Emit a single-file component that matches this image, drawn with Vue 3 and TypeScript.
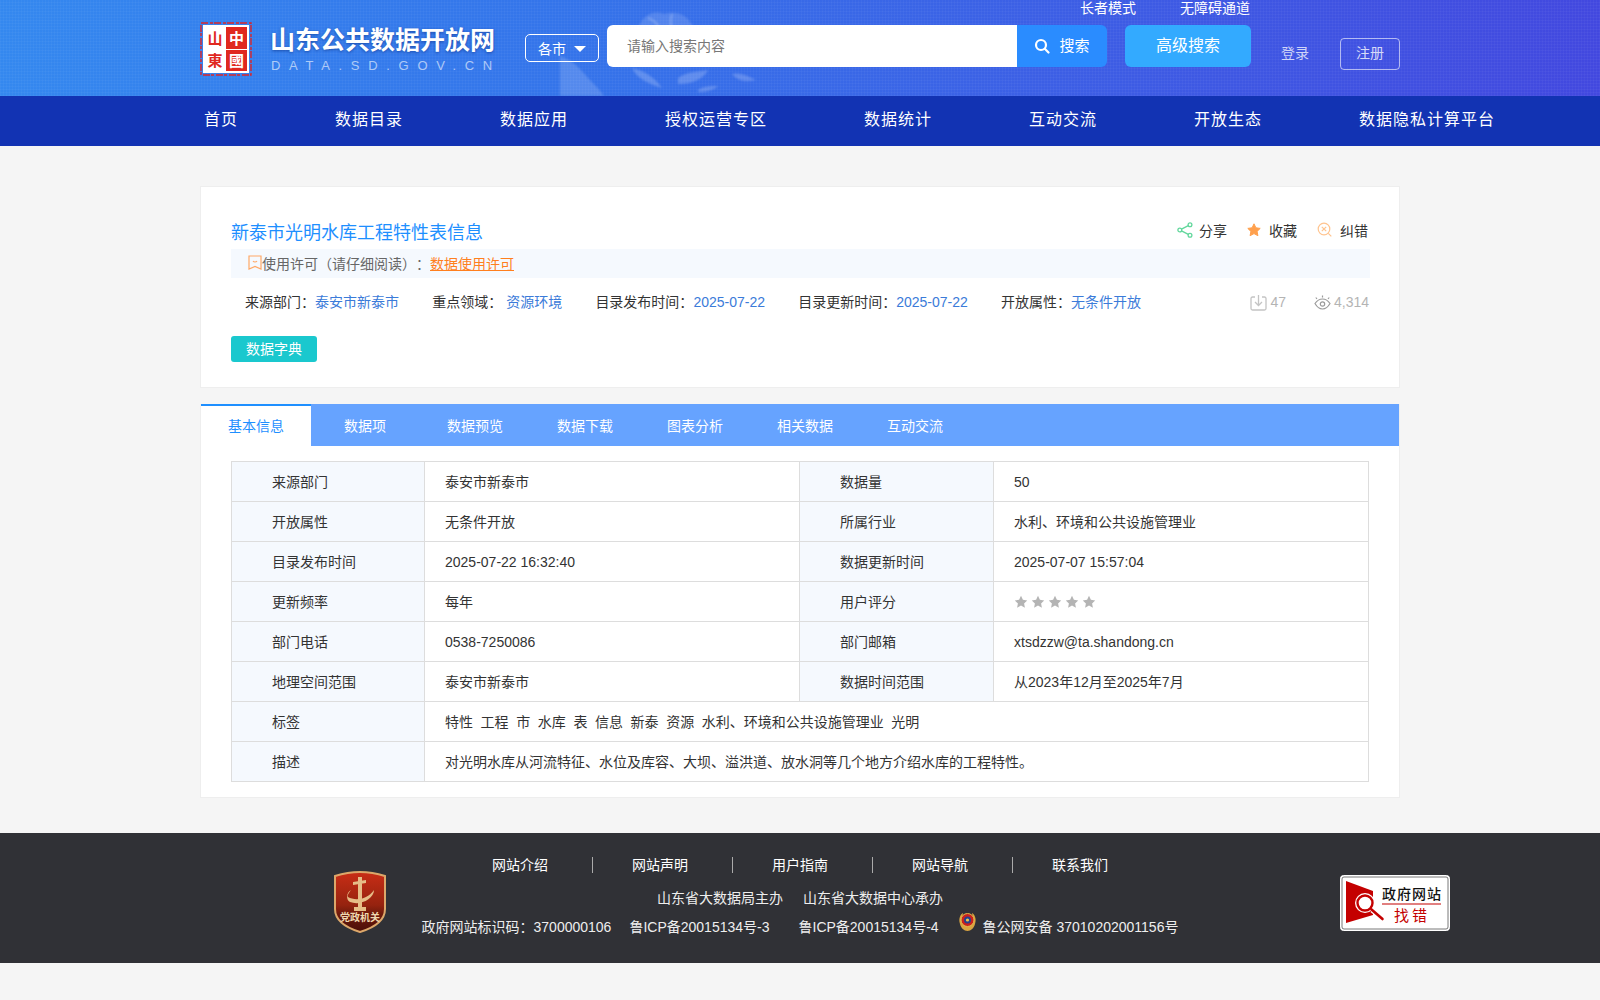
<script setup lang="ts">
const navItems: string[] = ['首页', '数据目录', '数据应用', '授权运营专区', '数据统计', '互动交流', '开放生态', '数据隐私计算平台']
const tabs: string[] = ['基本信息', '数据项', '数据预览', '数据下载', '图表分析', '相关数据', '互动交流']
const footerLinks: string[] = ['网站介绍', '网站声明', '用户指南', '网站导航', '联系我们']
const rows: [string, string, string, string][] = [
  ['来源部门', '泰安市新泰市', '数据量', '50'],
  ['开放属性', '无条件开放', '所属行业', '水利、环境和公共设施管理业'],
  ['目录发布时间', '2025-07-22 16:32:40', '数据更新时间', '2025-07-07 15:57:04'],
  ['更新频率', '每年', '用户评分', ''],
  ['部门电话', '0538-7250086', '部门邮箱', 'xtsdzzw@ta.shandong.cn'],
  ['地理空间范围', '泰安市新泰市', '数据时间范围', '从2023年12月至2025年7月']
]
const tags: string[] = ['特性', '工程', '市', '水库', '表', '信息', '新泰', '资源', '水利、环境和公共设施管理业', '光明']
const starPath = 'M7 .8l1.9 4 4.3.6-3.1 3 .8 4.3L7 10.6l-3.9 2.1.8-4.3-3.1-3 4.3-.6z'
const isCjk = (value: string): boolean => /[^\x00-\x7f]/.test(value)
</script>

<template>
  <div class="page">
    <header class="header">
      <svg class="cloud" viewBox="0 0 240 96" aria-hidden="true">
        <path d="M80 24c4-9 14-14 24-10 10-3 22 0 26 8 5 4 3 11-3 12l-47 2c-4-3-4-8 0-12z" fill="#fff" opacity=".14" />
        <path d="M88 18c6 2 10 6 12 12M112 14c-2 6-2 12 2 18" stroke="#fff" stroke-width="2" fill="none" opacity=".22" />
        <path d="M0 56c12 4 20 12 28 22 6 6 12 12 16 18H0z" fill="#fff" opacity=".16" />
        <path d="M72 68c10 2 22 8 30 20-12-4-24-8-30-20zM118 78c8-6 18-6 30-8-4 8-14 14-30 14zM172 74c8-2 16 2 24 6-8 2-18 2-24-6zM138 90c6-4 12-4 20-4-4 4-12 6-20 6z" fill="#fff" opacity=".2" />
      </svg>
      <div class="header-inner">
        <div class="top-links"><span>长者模式</span><span>无障碍通道</span></div>
        <div class="main-row">
          <div class="logo">
            <svg class="seal" viewBox="0 0 52 54" aria-hidden="true">
              <rect x="1" y="1" width="50" height="52" fill="none" stroke="#d9262b" stroke-width="1.4" stroke-dasharray="7 2 3 1" />
              <rect x="3" y="3" width="46" height="48" fill="#fff" />
              <rect x="26" y="5" width="21" height="22" fill="#e0281f" />
              <rect x="26" y="28" width="21" height="21" fill="#e0281f" />
              <text x="15" y="22" class="seal-text seal-red">山</text>
              <text x="15" y="44" class="seal-text seal-red">東</text>
              <text x="36.500" y="22" class="seal-text seal-white">中</text>
              <text x="36.500" y="44" class="seal-text seal-white">國</text>
            </svg>
            <div class="logo-text">
              <div class="logo-title">山东公共数据开放网</div>
              <div class="logo-sub">DATA.SD.GOV.CN</div>
            </div>
          </div>
          <div class="city"><span>各市</span><i class="caret"></i></div>
          <div class="search">
            <input class="search-input" type="text" placeholder="请输入搜索内容" />
            <button class="search-btn" type="button">
              <svg width="16" height="16" viewBox="0 0 16 16" aria-hidden="true">
                <circle cx="7" cy="7" r="5" fill="none" stroke="#fff" stroke-width="2.2" />
                <path d="M10.800 10.800l3.700 3.700" stroke="#fff" stroke-width="2.2" stroke-linecap="round" />
              </svg>
              <span>搜索</span>
            </button>
          </div>
          <button class="advanced" type="button">高级搜索</button>
          <span class="login">登录</span>
          <span class="register">注册</span>
        </div>
      </div>
    </header>

    <nav class="nav">
      <div class="nav-inner">
        <a v-for="item in navItems" :key="item" class="nav-item">{{ item }}</a>
      </div>
    </nav>

    <main class="content">
      <section class="card summary">
        <div class="title-row">
          <h1 class="title">新泰市光明水库工程特性表信息</h1>
          <div class="actions">
            <span class="action">
              <svg width="16" height="16" viewBox="0 0 16 16" aria-hidden="true">
                <g fill="none" stroke="#62d79c" stroke-width="1.300">
                  <circle cx="2.800" cy="8" r="1.900" /><circle cx="13" cy="2.800" r="1.900" /><circle cx="13" cy="13.200" r="1.900" />
                  <path d="M4.500 7.100l6.800-3.500M4.500 8.900l6.800 3.500" />
                </g>
              </svg>
              分享
            </span>
            <span class="action wide">
              <svg width="14" height="14" viewBox="0 0 14 14" aria-hidden="true"><path :d="starPath" fill="#ffa04d" stroke="#ffa04d" stroke-linejoin="round" /></svg>
              收藏
            </span>
            <span class="action wide">
              <svg width="15" height="15" viewBox="0 0 15 15" aria-hidden="true">
                <g fill="none" stroke="#ffc48f" stroke-width="1.200">
                  <circle cx="7" cy="7" r="5.800" /><path d="M4.800 4.800l4.400 4.400M9.200 4.800l-4.400 4.400M11.300 11.300l3 3" />
                </g>
              </svg>
              纠错
            </span>
          </div>
        </div>
        <div class="license">
          <svg width="14" height="15" viewBox="0 0 14 15" aria-hidden="true">
            <path d="M1 1h12v13l-6-2.500L1 14zM5 6c1 1.300 3 1.300 4 0" fill="none" stroke="#ffa866" stroke-width="1.200" />
          </svg>
          <span>使用许可（请仔细阅读）：</span><a class="license-link">数据使用许可</a>
        </div>
        <div class="meta">
          <span>来源部门：<em>泰安市新泰市</em></span>
          <span>重点领域：<em class="spaced">资源环境</em></span>
          <span>目录发布时间：<em>2025-07-22</em></span>
          <span>目录更新时间：<em>2025-07-22</em></span>
          <span>开放属性：<em>无条件开放</em></span>
          <div class="counters">
            <span class="counter">
              <svg width="17" height="17" viewBox="0 0 17 17" aria-hidden="true">
                <path d="M5 3H2.500A1.500 1.500 0 0 0 1 4.500v10A1.500 1.500 0 0 0 2.500 16h12a1.500 1.500 0 0 0 1.500-1.500v-10A1.500 1.500 0 0 0 14.500 3H12M8.500 1v10M5 8l3.500 3.500L12 8" fill="none" stroke="#c4c4c4" stroke-width="1.300" />
              </svg>
              47
            </span>
            <span class="counter">
              <svg width="17" height="16" viewBox="0 0 17 16" aria-hidden="true">
                <g fill="none" stroke="#9a9a9a" stroke-width="1.200">
                  <path d="M1 9.500C3 6.500 5.500 5 8.500 5s5.500 1.500 7.500 4.500C14 13 11.500 15 8.500 15S3 13 1 9.500z" />
                  <circle cx="8.500" cy="10" r="2.200" />
                  <path d="M3 5L1.800 3.500M8.500 3.500V1.500M14 5l1.200-1.500" />
                </g>
              </svg>
              4,314
            </span>
          </div>
        </div>
        <button class="dict" type="button">数据字典</button>
      </section>

      <section class="card detail">
        <div class="tabs">
          <span v-for="(tab, i) in tabs" :key="i" class="tab" :class="{ active: i === 0 }">{{ tab }}</span>
        </div>
        <table class="table">
          <colgroup>
            <col class="col-a" /><col class="col-b" /><col class="col-c" /><col class="col-d" />
          </colgroup>
          <tbody>
            <tr v-for="row in rows" :key="row[0]">
              <th>{{ row[0] }}</th>
              <td :class="{ lift: isCjk(row[1]) }">{{ row[1] }}</td>
              <th>{{ row[2] }}</th>
              <td :class="{ lift: isCjk(row[3]) }">
                <template v-if="row[3]">{{ row[3] }}</template>
                <span v-else class="stars">
                  <svg v-for="n in 5" :key="n" width="14" height="14" viewBox="0 0 14 14" aria-hidden="true"><path :d="starPath" fill="#b4b4b4" /></svg>
                </span>
              </td>
            </tr>
            <tr>
              <th>标签</th>
              <td colspan="3" class="lift"><span class="tag-list"><span v-for="t in tags" :key="t">{{ t }}</span></span></td>
            </tr>
            <tr>
              <th>描述</th>
              <td colspan="3" class="lift">对光明水库从河流特征、水位及库容、大坝、溢洪道、放水洞等几个地方介绍水库的工程特性。</td>
            </tr>
          </tbody>
        </table>
      </section>
    </main>

    <footer class="footer">
      <div class="foot-left">
        <svg class="party" viewBox="0 0 52 62" aria-hidden="true">
          <defs>
            <linearGradient id="partyFill" x1="0" y1="0" x2="0" y2="1">
              <stop offset="0" stop-color="#c92d16" />
              <stop offset=".55" stop-color="#96230f" />
              <stop offset=".7" stop-color="#6e1a0c" />
              <stop offset="1" stop-color="#4a0f08" />
            </linearGradient>
          </defs>
          <path d="M26 1c8 0 17 1.500 25 4v33c0 12-12 19-25 23C13 57 1 50 1 38V5c8-2.500 17-4 25-4z" fill="url(#partyFill)" stroke="#dca76a" stroke-width="2" />
          <path d="M24 6h4v30h4v4H20v-4h4zM19 11l13-2v3l-13 2z" fill="#e6bd87" />
          <path d="M14 26c7 4 19 3 26-7 0 9-14 16-24 12-4-2-4-9 1-12-2 3-4 5-3 7z" fill="#e6bd87" />
          <text x="26" y="50" class="party-text">党政机关</text>
        </svg>
      </div>
      <div class="foot-center">
        <div class="foot-links">
          <a v-for="l in footerLinks" :key="l" class="foot-link">{{ l }}</a>
        </div>
        <div class="foot-org"><span>山东省大数据局主办</span><span>山东省大数据中心承办</span></div>
        <div class="foot-ids">
          <span>政府网站标识码：3700000106</span>
          <span class="id-b">鲁ICP备20015134号-3</span>
          <span class="id-c">鲁ICP备20015134号-4</span>
          <svg class="police" viewBox="0 0 19 20" aria-hidden="true">
            <path d="M2 12C0 6 3 2 5 1c-1 4 0 8 4.500 12 4.500-4 5.500-8 4.500-12 2 1 5 5 3 11-1 4-4 7-7.500 7S3 16 2 12z" fill="#d9a441" />
            <circle cx="9.500" cy="8" r="6.500" fill="#c8211e" stroke="#e5b84a" />
            <circle cx="9.500" cy="8" r="3.500" fill="#24408f" />
            <circle cx="9.500" cy="8" r="1.600" fill="#f0c64f" />
          </svg>
          <span class="id-d">鲁公网安备 37010202001156号</span>
        </div>
      </div>
      <div class="foot-right">
        <svg class="report" viewBox="0 0 110 56" aria-hidden="true">
          <rect x=".5" y=".5" width="109" height="55" rx="3" fill="#fff" stroke="#fff" />
          <rect x="2" y="2" width="106" height="52" rx="2" fill="#fff" stroke="#555" stroke-width=".8" />
          <path d="M6 6l27 10v24L6 48z" fill="#c40000" />
          <circle cx="25" cy="28" r="10" fill="#fff" />
          <circle cx="25" cy="28" r="7.500" fill="#fff" stroke="#c40000" stroke-width="2.400" />
          <path d="M32 35l11 9" stroke="#fff" stroke-width="5" />
          <path d="M31.500 34.500l11 9.500" stroke="#c40000" stroke-width="2.600" stroke-linecap="round" />
          <text x="72" y="24" class="report-a">政府网站</text>
          <path d="M42 29h59" stroke="#c40000" stroke-width="1.200" />
          <text x="72" y="46" class="report-b">找错</text>
        </svg>
      </div>
    </footer>
  </div>
</template>

<style scoped>
.page {
  min-height: 1000px;
  background: #f5f5f5;
  font-family: "Liberation Sans", "Noto Sans CJK SC", sans-serif;
  font-size: 14px;
  color: #333;
  text-spacing-trim: space-all;
}
.header {
  position: relative;
  height: 96px;
  overflow: hidden;
  background-color: #3c70ea;
  background-image:
    repeating-linear-gradient(0deg, rgba(255, 255, 255, .03) 0 1px, transparent 1px 3px),
    repeating-linear-gradient(90deg, rgba(255, 255, 255, .03) 0 1px, transparent 1px 3px),
    linear-gradient(90deg, #3488ef 0%, #3474ea 35%, #3c5fe5 65%, #4248df 100%);
}
.cloud {
  position: absolute;
  left: 560px;
  top: 0;
  width: 240px;
  height: 96px;
  filter: blur(.8px);
}
.header-inner {
  position: relative;
  width: 1200px;
  margin: 0 auto;
}
.top-links {
  display: flex;
  gap: 44px;
  height: 16px;
  line-height: 16px;
  margin-left: 880px;
  color: #fff;
  white-space: nowrap;
}
.main-row {
  display: flex;
  align-items: flex-start;
  margin-top: 9px;
}
.logo {
  display: flex;
  width: 325px;
  flex: none;
  margin-top: -3px;
}
.seal {
  width: 52px;
  height: 54px;
  flex: none;
}
.seal-text {
  font-size: 15px;
  font-weight: 700;
  text-anchor: middle;
  font-family: "Noto Sans CJK SC", sans-serif;
}
.seal-red { fill: #e0281f; }
.seal-white { fill: #fff; }
.logo-text {
  margin-left: 18px;
}
.logo-title {
  margin-top: 3px;
  font-size: 25px;
  line-height: 30px;
  font-weight: 700;
  color: #fff;
  white-space: nowrap;
  text-shadow: 0 1px 3px rgba(0, 30, 110, .5);
}
.logo-sub {
  margin-top: 3px;
  margin-left: 1px;
  font-size: 13px;
  line-height: 16px;
  letter-spacing: 8.700px;
  color: rgba(255, 255, 255, .6);
  white-space: nowrap;
}
.city {
  box-sizing: border-box;
  flex: none;
  width: 74px;
  height: 28px;
  margin-top: 9px;
  padding-left: 12px;
  display: flex;
  align-items: center;
  gap: 8px;
  border: 1px solid #fff;
  border-radius: 5px;
  color: #fff;
}
.caret {
  width: 0;
  height: 0;
  border-left: 6px solid transparent;
  border-right: 6px solid transparent;
  border-top: 6px solid #fff;
  margin-top: 2px;
}
.search {
  display: flex;
  flex: none;
  margin-left: 8px;
  height: 42px;
  width: 500px;
}
.search-input {
  box-sizing: border-box;
  width: 410px;
  height: 42px;
  padding: 0 20px;
  border: 0;
  outline: 0;
  border-radius: 6px 0 0 6px;
  background: #fff;
  font: inherit;
}
.search-input::placeholder {
  color: #777;
  opacity: 1;
}
.search-btn {
  width: 90px;
  height: 42px;
  border: 0;
  padding: 0 0 3px;
  display: flex;
  align-items: center;
  justify-content: center;
  gap: 9px;
  border-radius: 0 6px 6px 0;
  background: #2a8cff;
  color: #fff;
  font: inherit;
  font-size: 15px;
}
.search-btn svg {
  margin-top: 2px;
}
.advanced {
  flex: none;
  margin-left: 18px;
  width: 126px;
  height: 42px;
  border: 0;
  padding: 0 0 5px;
  border-radius: 6px;
  background: #33aaff;
  color: #fff;
  font: inherit;
  font-size: 16px;
}
.login {
  flex: none;
  margin-left: 30px;
  margin-top: 18px;
  color: rgba(255, 255, 255, .75);
  line-height: 20px;
}
.register {
  box-sizing: border-box;
  flex: none;
  margin-left: 31px;
  margin-top: 13px;
  width: 60px;
  height: 32px;
  line-height: 28px;
  text-align: center;
  border: 1px solid rgba(255, 255, 255, .6);
  border-radius: 4px;
  color: rgba(255, 255, 255, .8);
}
.nav {
  height: 50px;
  background: #1233b3;
}
.nav-inner {
  width: 1200px;
  margin: 0 auto;
  padding: 0 0 0 4px;
  box-sizing: border-box;
  display: flex;
  gap: 97px;
}
.nav-item {
  line-height: 48px;
  font-size: 16px;
  letter-spacing: 1px;
  color: #fff;
  white-space: nowrap;
}
.content {
  width: 1200px;
  margin: 0 auto;
  padding-top: 40px;
}
.card {
  box-sizing: border-box;
  background: #fff;
  border: 1px solid #eee;
}
.summary {
  height: 202px;
  padding: 29px 29px 0 30px;
}
.title-row {
  height: 33px;
  display: flex;
  align-items: center;
  justify-content: space-between;
  padding-right: 2px;
}
.title {
  margin: 0 0 4px;
  font-size: 18px;
  font-weight: 400;
  color: #1e8fff;
}
.actions {
  display: flex;
  gap: 20px;
  margin-bottom: 6px;
}
.action {
  display: flex;
  align-items: center;
  gap: 6px;
  color: #333;
}
.action.wide {
  gap: 8px;
}
.license {
  height: 29px;
  box-sizing: border-box;
  display: flex;
  align-items: center;
  padding: 0 0 2px 17px;
  background: #f5f9fe;
  color: #666;
}
.license-link {
  color: #ff7f1e;
  text-decoration: underline;
}
.meta {
  height: 46px;
  display: flex;
  align-items: center;
  gap: 33.200px;
  padding: 0 1px 0 14px;
  color: #333;
  white-space: nowrap;
}
.meta em {
  font-style: normal;
  color: #3b7bd9;
}
.meta em.spaced {
  margin-left: 4px;
}
.counters {
  margin: 2px 0 0 auto;
  display: flex;
  gap: 28px;
  color: #b4b4b4;
}
.counter {
  display: flex;
  align-items: center;
  gap: 3px;
}
.dict {
  display: block;
  width: 86px;
  height: 26px;
  margin-top: 12px;
  padding: 0 0 3px;
  border: 0;
  border-radius: 3px;
  background: #1ac8ce;
  color: #fff;
  font: inherit;
}
.detail {
  margin-top: 16px;
  height: 394px;
  border-top: 0;
}
.tabs {
  display: flex;
  height: 42px;
  background: #66a3ff;
}
.tab {
  box-sizing: border-box;
  width: 110px;
  height: 42px;
  padding-right: 2px;
  line-height: 44px;
  text-align: center;
  color: #fff;
}
.tab.active {
  padding-right: 0;
  line-height: 40px;
  background: #fff;
  border-top: 2px solid #1e8fff;
  color: #1e8fff;
}
.table {
  width: 1137px;
  margin: 15px 0 0 30px;
  border-collapse: collapse;
  table-layout: fixed;
}
.col-a { width: 193px; }
.col-b { width: 375px; }
.col-c { width: 194px; }
.col-d { width: 375px; }
.table th,
.table td {
  box-sizing: border-box;
  height: 40px;
  padding: 0 0 0 20px;
  border: 1px solid #ddd;
  text-align: left;
  font-weight: 400;
  color: #333;
}
.table td.lift {
  padding-bottom: 2px;
}
.table th {
  padding: 0 0 2px 40px;
  background: #f5f9fe;
}
.stars {
  display: flex;
  gap: 3px;
}
.tag-list {
  display: flex;
  gap: 7.600px;
}
.footer {
  margin-top: 35px;
  height: 130px;
  background: #303136;
  display: grid;
  grid-template-columns: 1fr auto 1fr;
  color: #eee;
}
.foot-left {
  display: flex;
  justify-content: flex-end;
  padding: 38px 36px 0 0;
}
.party {
  width: 52px;
  height: 62px;
}
.party-text {
  font-size: 10px;
  font-weight: 700;
  fill: #f0d8b0;
  text-anchor: middle;
  font-family: "Noto Sans CJK SC", sans-serif;
}
.foot-center {
  padding-top: 22px;
  display: flex;
  flex-direction: column;
  align-items: center;
}
.foot-links {
  display: flex;
  height: 20px;
  align-items: center;
}
.foot-link {
  line-height: 16px;
  padding-right: 44px;
  margin-right: 39px;
  border-right: 1px solid #aaa;
  color: #fff;
}
.foot-link:last-child {
  padding-right: 0;
  margin-right: 0;
  border-right: 0;
}
.foot-org {
  display: flex;
  gap: 20px;
  margin-top: 13px;
  line-height: 20px;
}
.foot-ids {
  display: flex;
  align-items: center;
  margin-top: 8px;
  height: 20px;
  white-space: nowrap;
}
.id-b { margin-left: 18px; }
.id-c { margin-left: 29px; }
.police {
  width: 19px;
  height: 20px;
  margin: -9px 6px 0 19px;
}
.foot-right {
  padding: 42px 0 0 162px;
}
.report {
  display: block;
  width: 110px;
  height: 56px;
}
.report-a {
  font-size: 14px;
  letter-spacing: 1px;
  font-weight: 500;
  fill: #111;
  text-anchor: middle;
  font-family: "Noto Sans CJK SC", sans-serif;
}
.report-b {
  font-size: 15px;
  letter-spacing: 3px;
  fill: #c40000;
  text-anchor: middle;
  font-family: "Noto Sans CJK SC", sans-serif;
}
</style>

<style>
html, body {
  margin: 0;
  background: #f5f5f5;
}
</style>
